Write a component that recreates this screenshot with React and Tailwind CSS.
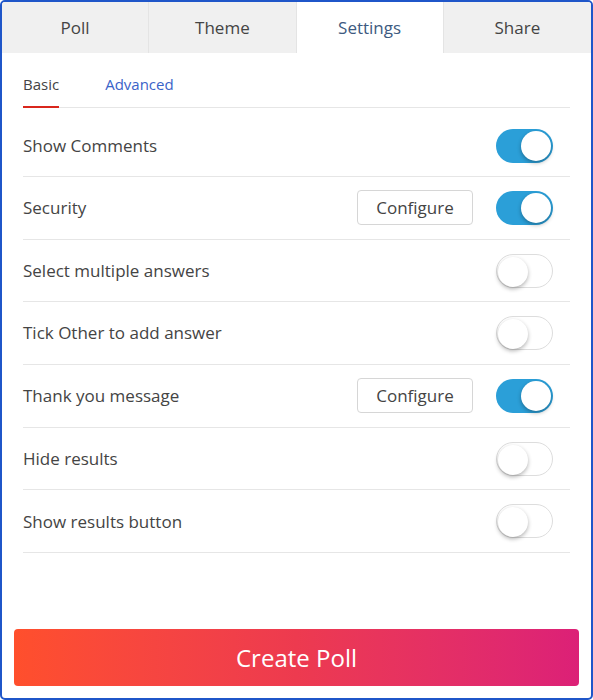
import React, { useState } from 'react';

const font = { fontFamily: '"Open Sans", "Noto Sans", sans-serif' };

function Toggle({ on, onChange }) {
  return (
    <button
      onClick={onChange}
      className={`relative w-[57px] h-[34px] rounded-full shrink-0 ${
        on ? 'bg-[#2b9fd8]' : 'bg-white border border-[#dddddd]'
      }`}
    >
      <span
        className={`absolute top-[2px] w-[30px] h-[30px] rounded-full bg-white shadow-[0_2px_4px_rgba(0,0,0,0.3)] ${
          on ? 'right-[2px]' : 'left-[1px] top-[1px]'
        }`}
      />
    </button>
  );
}

const tabs = ['Poll', 'Theme', 'Settings', 'Share'];

export default function App() {
  const [rows, setRows] = useState([
    { label: 'Show Comments', on: true },
    { label: 'Security', on: true, configure: true },
    { label: 'Select multiple answers', on: false },
    { label: 'Tick Other to add answer', on: false },
    { label: 'Thank you message', on: true, configure: true },
    { label: 'Hide results', on: false },
    { label: 'Show results button', on: false },
  ]);

  const flip = (i) =>
    setRows(rows.map((r, j) => (j === i ? { ...r, on: !r.on } : r)));

  return (
    <div className="h-[700px] w-[593px] bg-white border-2 border-[#1f56c9] rounded-[5px] overflow-hidden flex flex-col" style={font}>
      {/* Tabs */}
      <div className="grid grid-cols-4 h-[51px] shrink-0">
        {tabs.map((t, i) => (
          <div
            key={t}
            className={`flex items-center justify-center text-[17px] ${
              t === 'Settings'
                ? 'bg-white text-[#3d5a80]'
                : 'bg-[#f0f0f0] text-[#444444]'
            } ${i < 3 ? 'border-r border-[#e4e4e4]' : ''}`}
          >
            {t}
          </div>
        ))}
      </div>

      <div className="px-[21px] flex-1 flex flex-col">
        {/* Sub tabs */}
        <div className="flex gap-[46px] border-b border-[#e6e6e6] h-[55px] items-end">
          <div className="relative pb-[12px] text-[15px] text-[#444444]">
            Basic
            <span className="absolute left-0 right-0 bottom-[-1px] h-[2px] bg-[#d9261c]" />
          </div>
          <div className="pb-[12px] text-[15px] text-[#3a63c8]">Advanced</div>
        </div>

        {/* Settings rows */}
        <div className="flex flex-col">
          {rows.map((r, i) => (
            <div
              key={r.label}
              className={`flex items-center border-b border-[#e6e6e6] pr-[17px] ${
                i === 0 ? 'h-[69px] pt-[7px]' : 'h-[62.7px]'
              }`}
            >
              <span className="flex-1 text-[17px] text-[#444444]">{r.label}</span>
              {r.configure && (
                <button className="mr-[23px] w-[116px] h-[35px] rounded-[4px] border border-[#d6d6d6] text-[17px] text-[#444444] bg-white">
                  Configure
                </button>
              )}
              <Toggle on={r.on} onChange={() => flip(i)} />
            </div>
          ))}
        </div>
      </div>

      {/* Create button */}
      <div className="px-[12px] pb-[12px]">
        <button className="w-full h-[57px] rounded-[4px] bg-gradient-to-r from-[#ff4f2c] via-[#ed3a4f] to-[#dc2077] text-white text-[24px]">
          Create Poll
        </button>
      </div>
    </div>
  );
}
